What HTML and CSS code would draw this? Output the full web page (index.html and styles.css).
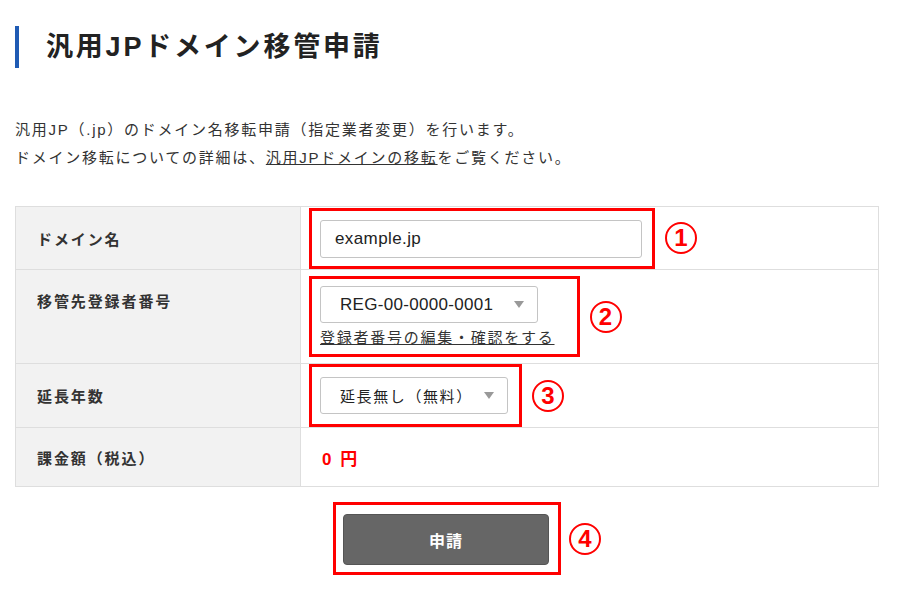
FILE: index.html
```html
<!DOCTYPE html>
<html lang="ja">
<head>
  <meta charset="UTF-8">
  <title>汎用JPドメイン移管申請</title>
  <link rel="stylesheet" href="styles.css">
</head>
<body>
  <div class="page">
    <h1 class="page-title">汎用JPドメイン移管申請</h1>
    <p class="lead">
      汎用JP（.jp）のドメイン名移転申請（指定業者変更）を行います。<br>
      ドメイン移転についての詳細は、<a href="#">汎用JPドメインの移転</a>をご覧ください。
    </p>

    <table class="form-table">
      <tr class="row-domain">
        <th>ドメイン名</th>
        <td>
          <div class="field">
            <div class="mark mark-domain">
              <input class="text-input" type="text" value="example.jp">
            </div>
            <span class="num">1</span>
          </div>
        </td>
      </tr>
      <tr class="row-registrant">
        <th>移管先登録者番号</th>
        <td>
          <div class="field">
            <div class="mark mark-registrant">
              <div class="select select-reg">
                <span>REG-00-0000-0001</span>
                <svg class="arrow" width="10" height="7" viewBox="0 0 10 7"><path d="M0 0h10L5 7z" fill="#999"/></svg>
              </div>
              <a class="edit-link" href="#">登録者番号の編集・確認をする</a>
            </div>
            <span class="num">2</span>
          </div>
        </td>
      </tr>
      <tr class="row-years">
        <th>延長年数</th>
        <td>
          <div class="field">
            <div class="mark mark-years">
              <div class="select select-years">
                <span>延長無し（無料）</span>
                <svg class="arrow" width="10" height="7" viewBox="0 0 10 7"><path d="M0 0h10L5 7z" fill="#999"/></svg>
              </div>
            </div>
            <span class="num">3</span>
          </div>
        </td>
      </tr>
      <tr class="row-price">
        <th>課金額（税込）</th>
        <td><span class="price">0 円</span></td>
      </tr>
    </table>

    <div class="actions">
      <div class="mark mark-submit">
        <button class="submit-btn" type="button">申請</button>
      </div>
      <span class="num">4</span>
    </div>
  </div>
</body>
</html>
```

FILE: styles.css
```css
/* General */
body {
  margin: 0;
  font-family: "Liberation Sans", "Noto Sans CJK JP", sans-serif;
  color: #333;
  background: #fff;
}

.page {
  padding: 26px 19px 0 15px;
}

/* Heading */
.page-title {
  margin: 0;
  height: 42px;
  line-height: 42px;
  padding-left: 27px;
  border-left: 4px solid #1f5bb4;
  font-size: 27px;
  letter-spacing: 2.8px;
  font-weight: bold;
  color: #222;
}

.lead {
  margin: 48px 0 34px;
  font-size: 15px;
  line-height: 28px;
  letter-spacing: 1.75px;
}

.lead a {
  color: #333;
}

/* Form table */
.form-table {
  width: 864px;
  border-collapse: collapse;
}

.form-table th,
.form-table td {
  border: 1px solid #dedede;
  padding: 0;
}

.form-table th {
  width: 263px;
  background: #f2f2f2;
  text-align: left;
  padding-left: 21px;
  font-size: 15px;
  letter-spacing: 1.9px;
  font-weight: bold;
  color: #333;
  vertical-align: middle;
}

.form-table td {
  padding-left: 8px;
  vertical-align: middle;
}

.row-domain { height: 63px; }
.row-registrant { height: 94px; }
.row-years { height: 63px; }
.row-price { height: 59px; }

.row-registrant th {
  vertical-align: top;
  padding-top: 20px;
}

.field {
  display: flex;
  align-items: center;
  gap: 10px;
}

/* Red annotation frames */
.mark {
  border: 3px solid #f00;
}

.mark-domain {
  padding: 9px 10px 8px 8px;
}

.mark-registrant {
  padding: 7px 22px 5px 8px;
}

.mark-years {
  padding: 10px 11px 10px 8px;
}

.num {
  box-sizing: border-box;
  width: 32px;
  height: 32px;
  border: 2px solid #f00;
  border-radius: 50%;
  display: flex;
  align-items: center;
  justify-content: center;
  color: #f00;
  font-family: "Liberation Sans", sans-serif;
  font-size: 24px;
  font-weight: bold;
  line-height: 1;
}

/* Controls */
.text-input {
  display: block;
  box-sizing: border-box;
  width: 322px;
  height: 38px;
  padding: 0 14px;
  border: 1px solid #c4c4c4;
  border-radius: 3px;
  font-family: "Liberation Sans", "Noto Sans CJK JP", sans-serif;
  font-size: 17px;
  letter-spacing: 0.4px;
  color: #222;
}

.select {
  box-sizing: border-box;
  height: 37px;
  display: flex;
  align-items: center;
  justify-content: space-between;
  padding: 0 13px 0 19px;
  border: 1px solid #c4c4c4;
  border-radius: 3px;
  font-size: 17px;
  color: #222;
}

.select-reg {
  width: 218px;
  letter-spacing: 0.3px;
}

.select-years {
  width: 188px;
  font-size: 15px;
  letter-spacing: 1.6px;
}

.edit-link {
  display: block;
  margin-top: 4px;
  font-size: 15px;
  line-height: 22px;
  letter-spacing: 1.75px;
  color: #333;
}

.price {
  margin-left: 13px;
  color: #f00;
  font-size: 17px;
  font-weight: bold;
  letter-spacing: 2px;
}

/* Submit */
.actions {
  width: 864px;
  margin-top: 15px;
  display: grid;
  grid-template-columns: 1fr auto 1fr;
  align-items: center;
  column-gap: 8px;
}

.actions .mark {
  grid-column: 2;
}

.actions .num {
  justify-self: start;
}

.mark-submit {
  padding: 9px 9px 7px 7px;
}

.submit-btn {
  display: block;
  width: 206px;
  height: 51px;
  border: 1px solid #555;
  border-radius: 4px;
  background: #666;
  color: #fff;
  font-family: "Noto Sans CJK JP", sans-serif;
  font-size: 16px;
  font-weight: bold;
  letter-spacing: 1px;
  cursor: pointer;
}
```
